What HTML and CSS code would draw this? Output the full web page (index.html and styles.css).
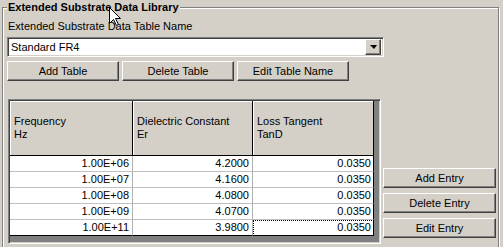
FILE: index.html
```html
<!DOCTYPE html>
<html>
<head>
  <meta charset="UTF-8">
  <title>Extended Substrate Data Library</title>
  <link rel="stylesheet" href="styles.css">
</head>
<body>
  <fieldset class="group">
    <legend>Extended Substrate Data Library</legend>

    <div class="field-label">Extended Substrate Data Table Name</div>
    <div class="combo">
      <span class="combo-value">Standard FR4</span>
      <span class="combo-btn"><span class="arrow"></span></span>
    </div>

    <div class="btn-row">
      <button class="win-btn">Add Table</button>
      <button class="win-btn">Delete Table</button>
      <button class="win-btn">Edit Table Name</button>
    </div>

    <div class="main">
      <div class="grid">
        <table>
          <thead>
            <tr>
              <th class="c1">Frequency<br>Hz</th>
              <th class="c2">Dielectric Constant<br>Er</th>
              <th class="c3">Loss Tangent<br>TanD</th>
            </tr>
          </thead>
          <tbody>
            <tr><td>1.00E+06</td><td>4.2000</td><td>0.0350</td></tr>
            <tr><td>1.00E+07</td><td>4.1600</td><td>0.0350</td></tr>
            <tr><td>1.00E+08</td><td>4.0800</td><td>0.0350</td></tr>
            <tr><td>1.00E+09</td><td>4.0700</td><td>0.0350</td></tr>
            <tr class="last"><td>1.00E+11</td><td>3.9800</td><td class="focus">0.0350</td></tr>
          </tbody>
        </table>
      </div>

      <div class="side-btns">
        <button class="win-btn wide">Add Entry</button>
        <button class="win-btn wide">Delete Entry</button>
        <button class="win-btn wide">Edit Entry</button>
      </div>
    </div>
  </fieldset>

  <!-- mouse pointer caught in the screenshot -->
  <svg class="cursor" width="13" height="20" viewBox="0 0 13 20">
    <path d="M0.5 0.5 L0.5 16.5 L4.5 12.5 L7.5 18.5 L9.5 17.5 L6.5 11.5 L11.5 11.5 Z" fill="#fff" stroke="#000" stroke-width="1"/>
  </svg>
</body>
</html>
```

FILE: styles.css
```css
html {
  overflow: hidden;
}
body {
  margin: 0;
  background: #d4d0c8;
  font-family: 'Liberation Sans', Arial, sans-serif;
  font-size: 11px;
  color: #000;
  position: relative;
}
.group {
  margin: 0 4px 0 2px;
  padding: 6px 2px 4px 4px;
  min-width: 0;
  border: 1px solid #808080;
  box-shadow: inset 1px 1px 0 #fff, 1px 1px 0 #fff;
}
.group legend {
  padding: 0 1px;
  font-weight: bold;
  line-height: 14px;
  background: #d4d0c8;
}
.field-label {
  padding-left: 1px;
  line-height: 13px;
  margin-bottom: 4px;
}
.combo {
  display: flex;
  align-items: center;
  box-sizing: border-box;
  width: 377px;
  height: 20px;
  background: #fff;
  border: 1px solid;
  border-color: #808080 #fff #fff #808080;
  box-shadow: inset 1px 1px 0 #404040, inset -1px -1px 0 #d4d0c8;
  padding: 2px 3px 2px 3px;
}
.combo-value {
  flex: 1;
}
.combo-btn {
  display: flex;
  align-items: center;
  justify-content: center;
  box-sizing: border-box;
  width: 16px;
  height: 16px;
  margin-right: -1px;
  background: #d4d0c8;
  border: 1px solid;
  border-color: #fff #404040 #404040 #fff;
  box-shadow: inset -1px -1px 0 #808080;
}
.arrow {
  width: 0;
  height: 0;
  border-left: 4px solid transparent;
  border-right: 3px solid transparent;
  border-top: 4px solid #000;
}
.btn-row {
  display: flex;
  gap: 3px;
  margin-top: 4px;
}
.win-btn {
  box-sizing: border-box;
  width: 112px;
  height: 20px;
  padding: 0;
  font-family: inherit;
  font-size: 11px;
  color: #000;
  background: #d4d0c8;
  border: 1px solid;
  border-color: #fff #404040 #404040 #fff;
  box-shadow: inset -1px -1px 0 #808080;
}
.win-btn.wide {
  width: 113px;
}
.main {
  display: flex;
  gap: 2px;
  margin-top: 18px;
}
.grid {
  box-sizing: border-box;
  width: 373px;
  height: 145px;
  margin-left: 1px;
  background: #808080;
  border: 1px solid;
  border-color: #808080 #fff #fff #808080;
  box-shadow: inset 1px 1px 0 #404040, inset -1px -1px 0 #d4d0c8;
  padding: 1px;
}
.grid table {
  border-collapse: separate;
  border-spacing: 0;
  table-layout: fixed;
  width: 364px;
}
.grid th {
  height: 54px;
  padding: 0 0 0 4px;
  text-align: left;
  vertical-align: middle;
  font-weight: normal;
  line-height: 13px;
  background: #d4d0c8;
  border-right: 1px solid #000;
  border-bottom: 1px solid #000;
  box-shadow: inset 1px 1px 0 #fff;
}
.grid th.c1 { width: 118px; }
.grid th.c2 { width: 115px; }
.grid th.c3 { width: 116px; }
.grid td {
  height: 15px;
  padding: 0 3px 0 0;
  text-align: right;
  line-height: 15px;
  background: #fff;
  border-right: 1px solid #b0b0b0;
  border-bottom: 1px solid #c0c0c0;
}
.grid td:last-child {
  border-right-color: #000;
  padding-right: 2px;
}
.grid tr.last td {
  border-bottom-color: #000;
}
.grid td.focus {
  outline: 1px dotted #000;
  outline-offset: -1px;
}
.side-btns {
  display: flex;
  flex-direction: column;
  gap: 5px;
  align-self: flex-end;
  margin-bottom: 6px;
}
.cursor {
  position: absolute;
  left: 109px;
  top: 7px;
}
```
